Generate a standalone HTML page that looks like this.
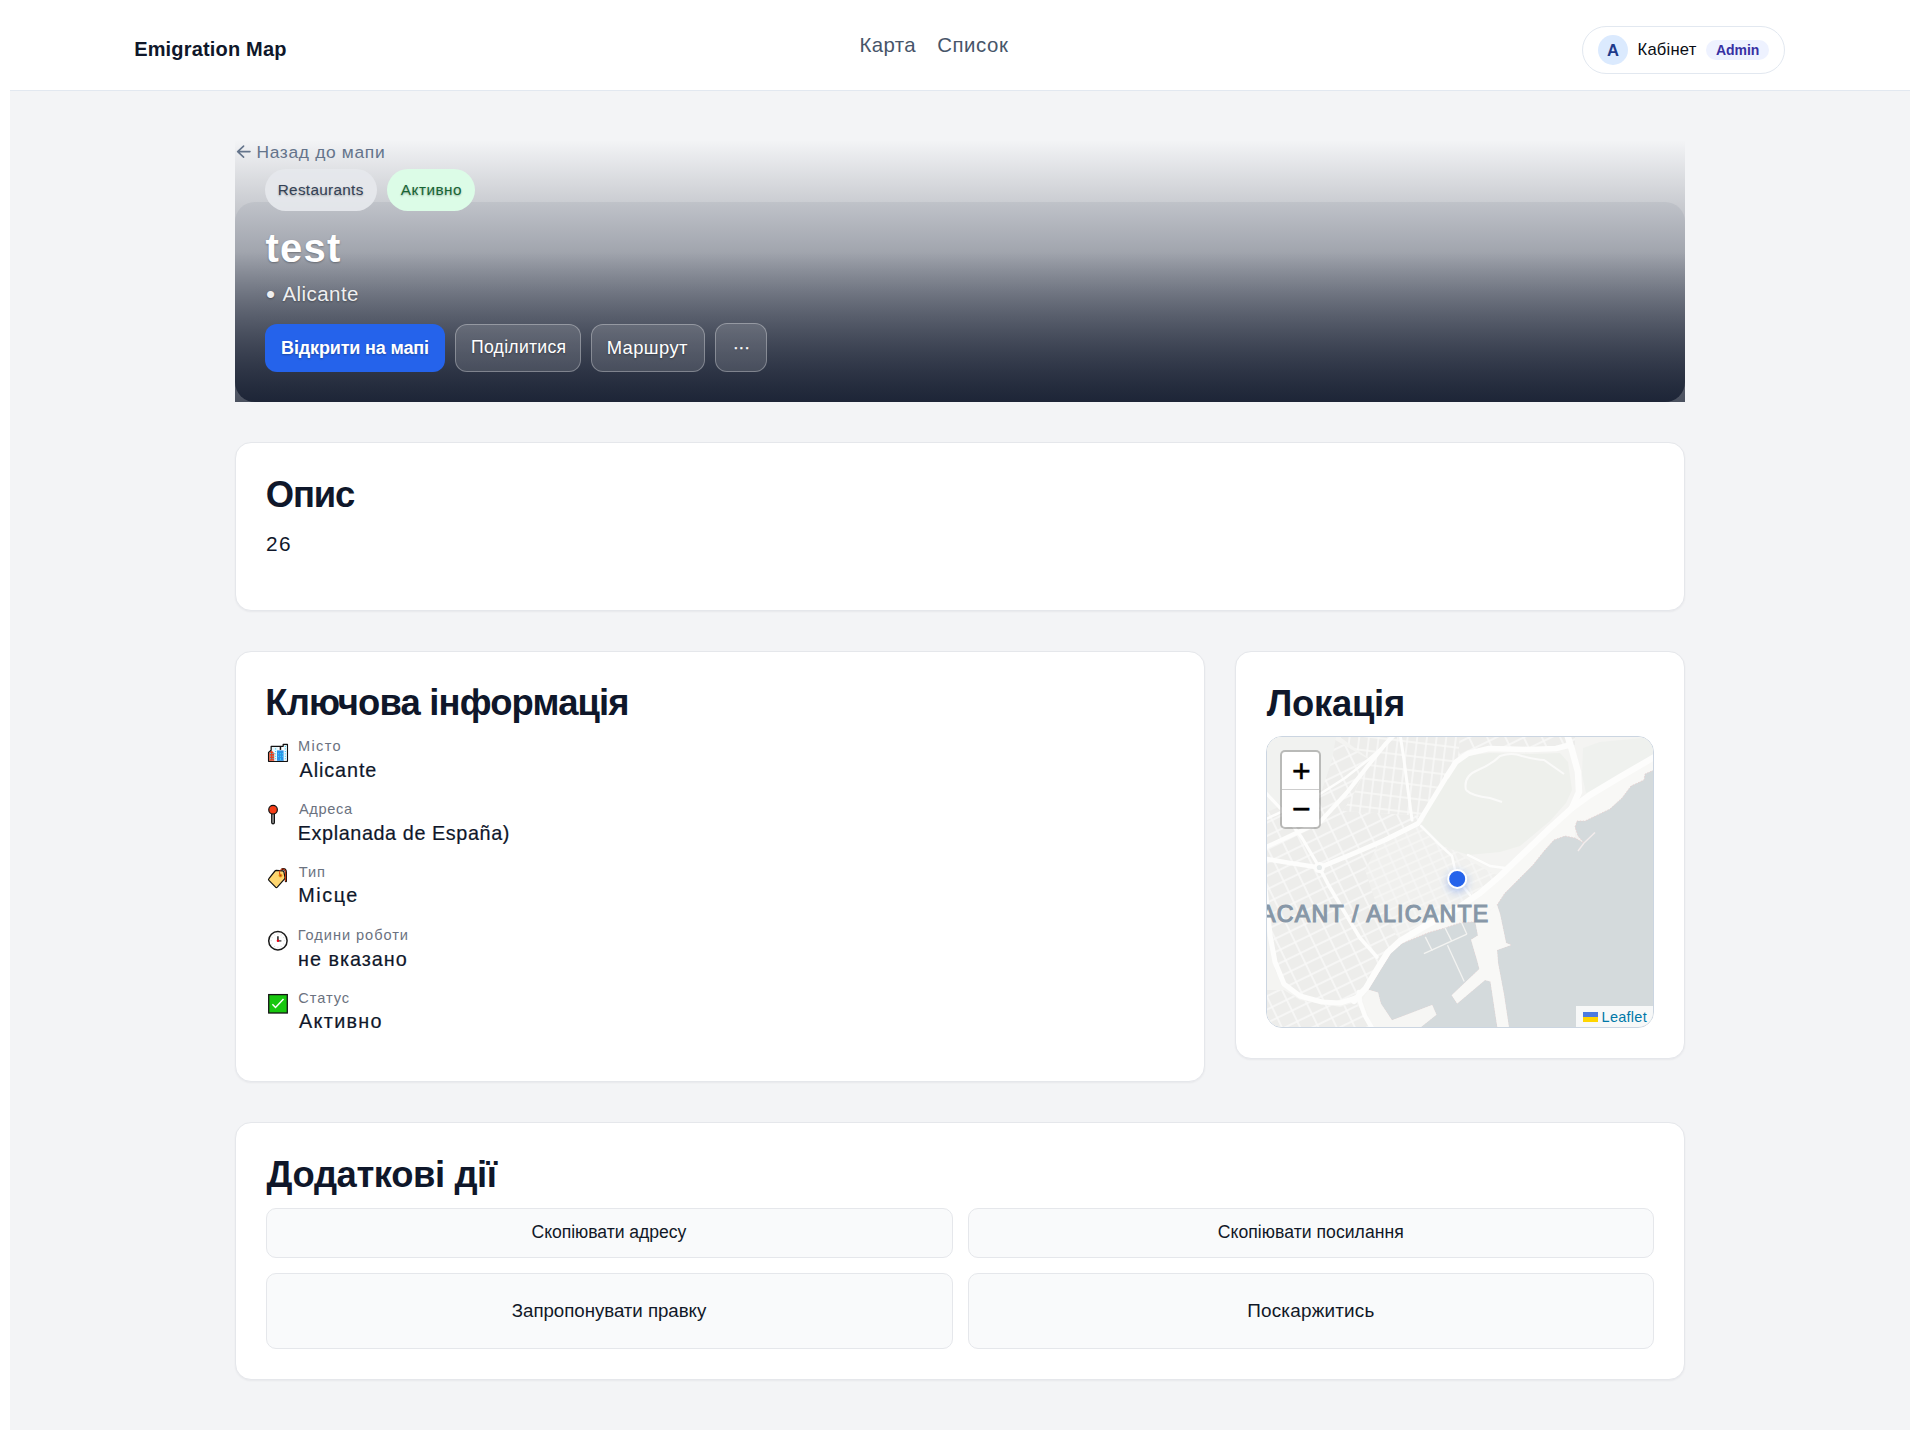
<!DOCTYPE html>
<html lang="uk">
<head>
<meta charset="utf-8">
<title>test — Emigration Map</title>
<style>
*{box-sizing:border-box;margin:0;padding:0}
html,body{width:1920px;height:1440px;background:#fff;overflow:hidden}
body{font-family:"Liberation Sans",sans-serif;color:#0f172a;position:relative}
.abs{position:absolute}
.t{position:absolute;white-space:nowrap;line-height:1;}
.b{font-weight:700}
#main{left:10px;top:91px;width:1900px;height:1339px;background:#f3f4f6}
#hdrline{left:10px;top:90px;width:1900px;height:1px;background:#e2e8f0}
.card{position:absolute;background:#fff;border:1px solid #e5e7eb;border-radius:16px;box-shadow:0 1px 2px rgba(15,23,42,.05)}
.pill{position:absolute;border-radius:999px}
.hbtn{position:absolute;border-radius:12px;border:1px solid rgba(255,255,255,.3);background:rgba(255,255,255,.13)}
.abtn{position:absolute;border:1px solid #e5e7eb;border-radius:10px;background:#f9fafb}
.lbl{color:#6b7280}
.hs{text-shadow:0 1px 2px rgba(0,0,0,.3)}
</style>
</head>
<body>
<!-- header -->
<div class="abs" id="hdrline"></div>
<div class="t b" id="logo" style="left:134.15px;top:39.25px;font-size:20px;letter-spacing:0.173px">Emigration Map</div>
<div class="t" id="nav1" style="left:859.50px;top:34.60px;font-size:20.4px;color:#475569;letter-spacing:0.355px">Карта</div>
<div class="t" id="nav2" style="left:937.15px;top:34.60px;font-size:20.4px;color:#475569;letter-spacing:0.600px">Список</div>
<div class="pill" id="userpill" style="left:1582px;top:26px;width:203px;height:48px;border:1px solid #e2e8f0;background:#fff"></div>
<div class="pill" id="avatar" style="left:1598px;top:35px;width:30px;height:30px;background:#dbeafe"></div>
<div class="t b" id="avA" style="left:1607.00px;top:42.61px;font-size:16.6px;color:#1e3a8a;letter-spacing:0.000px">A</div>
<div class="t" id="cab" style="left:1637.50px;top:42.00px;font-size:16.6px;color:#0a0d14;letter-spacing:0.209px">Кабінет</div>
<div class="pill" id="admbg" style="left:1706px;top:40px;width:63px;height:20px;background:#eef2ff"></div>
<div class="t b" id="adm" style="left:1716.00px;top:43.00px;font-size:14px;color:#3730a3;letter-spacing:-0.063px">Admin</div>

<div class="abs" id="main"></div>

<!-- hero -->
<div class="abs" id="herocard" style="left:235px;top:202px;width:1450px;height:200px;border-radius:20px;background:linear-gradient(180deg,rgba(15,23,42,0) 0%,rgba(15,23,42,0) 25%,rgba(15,23,42,.74) 100%),#e5e7eb"></div>
<div class="abs" id="herograd" style="left:235px;top:140px;width:1450px;height:262px;background:linear-gradient(180deg,rgba(15,23,42,0) 0%,rgba(15,23,42,.74) 100%)"></div>
<svg class="abs" style="left:230px;top:140px" width="30" height="24" viewBox="230 140 30 24"><path d="M250 151.6H237.6M243.6 146.1L237.7 151.6L243.6 157.1" fill="none" stroke="#64748b" stroke-width="1.6" stroke-linecap="round" stroke-linejoin="round"/></svg>
<div class="t" id="back" style="left:256.40px;top:143.61px;font-size:17.4px;color:#64748b;letter-spacing:0.685px">Назад до мапи</div>
<div class="pill" id="chip1" style="left:265px;top:169px;width:112px;height:42px;background:rgba(230,232,236,.94)"></div>
<div class="t hs" id="chip1t" style="left:277.75px;top:181.60px;font-size:15.3px;color:#334155;letter-spacing:0.305px">Restaurants</div>
<div class="pill" id="chip2" style="left:387px;top:169px;width:88px;height:42px;background:#dcfce7"></div>
<div class="t hs" id="chip2t" style="left:400.85px;top:181.60px;font-size:15.3px;color:#166534;letter-spacing:0.499px">Активно</div>
<div class="t b hs" id="title" style="left:265.50px;top:227.71px;font-size:40px;color:#fff;letter-spacing:1.250px">test</div>
<div class="t hs" id="locb" style="left:265.95px;top:281px;font-size:26px;color:rgba(255,255,255,.92);letter-spacing:0.000px">•</div>
<div class="t hs" id="loc" style="left:282.50px;top:284.00px;font-size:20.5px;color:rgba(255,255,255,.92);letter-spacing:0.436px">Alicante</div>
<div class="abs" id="hb1" style="left:265px;top:324px;width:180px;height:48px;border-radius:12px;background:#2563eb"></div>
<div class="t b hs" id="hb1t" style="left:281.10px;top:338.75px;font-size:18px;color:#fff;letter-spacing:-0.150px">Відкрити на мапі</div>
<div class="hbtn" id="hb2" style="left:455px;top:324px;width:126px;height:48px"></div>
<div class="t hs" id="hb2t" style="left:471.00px;top:339.00px;font-size:17.6px;color:#fff;letter-spacing:0.282px">Поділитися</div>
<div class="hbtn" id="hb3" style="left:591px;top:324px;width:114px;height:48px"></div>
<div class="t hs" id="hb3t" style="left:606.70px;top:339.21px;font-size:18.4px;color:#fff;letter-spacing:0.388px">Маршрут</div>
<div class="hbtn" id="hb4" style="left:715px;top:323px;width:52px;height:49px"></div>
<div class="t hs" id="hb4t" style="left:732.9px;top:339px;font-size:17px;color:#fff;letter-spacing:0px;-webkit-text-stroke:.3px #fff">···</div>

<!-- description card -->
<div class="card" id="c1" style="left:235px;top:442px;width:1450px;height:169px"></div>
<div class="t b" id="h1" style="left:265.80px;top:477.41px;font-size:36.4px;letter-spacing:-1.120px">Опис</div>
<div class="t" id="d26" style="left:266.05px;top:533.81px;font-size:20.8px;letter-spacing:1.350px">26</div>

<!-- key info card -->
<div class="card" id="c2" style="left:235px;top:651px;width:970px;height:431px"></div>
<div class="t b" id="h2" style="left:265.30px;top:685.41px;font-size:36.4px;letter-spacing:-0.832px">Ключова інформація</div>

<div class="t lbl" id="l1" style="left:298.10px;top:738.81px;font-size:14.6px;letter-spacing:1.292px">Місто</div>
<div class="t" id="v1" style="left:299.55px;top:760.71px;font-size:19.8px;letter-spacing:0.919px;-webkit-text-stroke:.2px #0f172a">Alicante</div>
<div class="t lbl" id="l2" style="left:299.00px;top:802.00px;font-size:14.6px;letter-spacing:0.630px">Адреса</div>
<div class="t" id="v2" style="left:297.80px;top:823.61px;font-size:19.8px;letter-spacing:0.600px;-webkit-text-stroke:.2px #0f172a">Explanada de España)</div>
<div class="t lbl" id="l3" style="left:298.75px;top:864.91px;font-size:14.6px;letter-spacing:0.950px">Тип</div>
<div class="t" id="v3" style="left:298.25px;top:885.50px;font-size:19.8px;letter-spacing:1.556px;-webkit-text-stroke:.2px #0f172a">Місце</div>
<div class="t lbl" id="l4" style="left:297.75px;top:927.75px;font-size:14.6px;letter-spacing:0.944px">Години роботи</div>
<div class="t" id="v4" style="left:298.05px;top:950.00px;font-size:19.8px;letter-spacing:0.990px;-webkit-text-stroke:.2px #0f172a">не вказано</div>
<div class="t lbl" id="l5" style="left:298.25px;top:990.75px;font-size:14.6px;letter-spacing:0.950px">Статус</div>
<div class="t" id="v5" style="left:299.00px;top:1011.50px;font-size:19.8px;letter-spacing:1.333px;-webkit-text-stroke:.2px #0f172a">Активно</div>

<!--ICONS-->
<svg class="abs" style="left:264px;top:740px" width="28" height="280" viewBox="264 740 28 280">
<!-- city -->
<path d="M268.6 761.3V752.6L271.2 750.2V746.3H283.2V744.5H287.4V761.3Z" fill="#fff" stroke="#111" stroke-width="1.3" stroke-linejoin="round"/>
<rect x="271.9" y="747.2" width="6.4" height="13.6" fill="#e9f7fd"/><rect x="279.7" y="746.3" width="1.5" height="3.6" fill="#111"/>
<rect x="283.9" y="745.3" width="2.9" height="15.5" fill="#eef8fd"/>
<path d="M269.3 760.8V753.2L271.7 750.6L274.2 753.2V760.8Z" fill="#e8401c"/>
<rect x="277" y="750.4" width="6.6" height="10.4" fill="#2a93e8"/>
<g fill="#35d6fb"><rect x="270" y="753" width="1" height="1"/><rect x="272.4" y="753" width="1.2" height="1"/><rect x="270" y="755.6" width="1" height="1"/><rect x="272.4" y="755.6" width="1.2" height="1"/><rect x="270" y="758.2" width="1" height="1"/><rect x="272.4" y="758.2" width="1.2" height="1"/>
<rect x="275" y="748.4" width="1.1" height="1"/><rect x="275" y="751" width="1.1" height="1"/><rect x="275" y="753.4" width="1.1" height="1"/><rect x="275" y="755.8" width="1.1" height="1"/><rect x="275" y="758.2" width="1.1" height="1"/>
<rect x="284.8" y="746" width="1.1" height="1"/><rect x="284.8" y="748.4" width="1.1" height="1"/><rect x="284.8" y="751" width="1.1" height="1"/><rect x="284.8" y="753.4" width="1.1" height="1"/><rect x="284.8" y="755.8" width="1.1" height="1"/><rect x="284.8" y="758.2" width="1.1" height="1"/>
<rect x="278" y="753.2" width="1" height="1"/><rect x="280" y="753.2" width="1" height="1"/><rect x="282" y="753.2" width="1" height="1"/><rect x="278" y="755.8" width="1" height="1"/><rect x="280" y="755.8" width="1" height="1"/><rect x="282" y="755.8" width="1" height="1"/><rect x="280" y="758.2" width="1" height="1.6"/></g>
<!-- pin -->
<path d="M271.7 813.5H274.4V822.6Q274.4 823.9 273.05 823.9Q271.7 823.9 271.7 822.6Z" fill="#9a9a9a" stroke="#111" stroke-width="1.2" stroke-linejoin="round"/>
<circle cx="273.05" cy="809.7" r="4.3" fill="#f53d17" stroke="#111" stroke-width="1.2"/>
<!-- tag -->
<path d="M282.4 869.2Q285.9 868.6 285.9 872.2V881.2" fill="none" stroke="#111" stroke-width="2.2" stroke-linecap="round"/>
<path d="M276.2 870.4L282.6 870.9Q283.7 871 283.9 872L285 877.3Q285.2 878.2 284.6 878.9L277.3 887.1Q276.5 887.9 275.6 887.2L268.9 880.3Q268.1 879.5 268.9 878.6L275 871Q275.5 870.4 276.2 870.4Z" fill="#fed670" stroke="#111" stroke-width="1.2" stroke-linejoin="round"/>
<circle cx="280.5" cy="875.4" r="2" fill="#eca416"/><circle cx="280.5" cy="875.4" r="1" fill="#c6380f"/>
<path d="M279.6 874.2Q279 869 282.6 868.9Q285.6 868.8 285.6 872.2V881" fill="none" stroke="#d83c10" stroke-width="1" stroke-linecap="round"/>
<!-- clock -->
<circle cx="277.9" cy="940.7" r="9.2" fill="#fff" stroke="#1a1a1a" stroke-width="1.5"/>
<g stroke="#d9d9d9" stroke-width=".9"><path d="M277.9 933.3v1.4M277.9 946.8v1.4M270.5 940.7h1.4M283.9 940.7h1.4M274.2 934.3l.7 1.2M281.6 934.3l-.7 1.2M274.2 947.1l.7-1.2M281.6 947.1l-.7-1.2M271.5 937l1.2.7M284.3 937l-1.2.7M271.5 944.4l1.2-.7M284.3 944.4l-1.2-.7"/></g>
<path d="M277.9 940.7V936.3" stroke="#444" stroke-width="1.8"/><path d="M277.9 940.9H281.4" stroke="#444" stroke-width="1.4"/>
<circle cx="277.9" cy="940.8" r="1.2" fill="#f00014"/>
<!-- check -->
<rect x="268.7" y="994.6" width="18.6" height="18.4" fill="#18c70f" stroke="#151515" stroke-width="1.3"/>
<path d="M272.4 1004.3L275.5 1007.5L283.5 999.1" fill="none" stroke="#fff" stroke-width="1.5"/>
</svg>
<!--/ICONS-->
<!-- location card -->
<div class="card" id="c3" style="left:1235px;top:651px;width:450px;height:408px"></div>
<div class="t b" id="h3" style="left:1266.85px;top:686.00px;font-size:36.4px;letter-spacing:-0.262px">Локація</div>
<div class="abs" id="map" style="left:1266px;top:736px;width:388px;height:292px;border:1px solid #cbd5e1;border-radius:16px;overflow:hidden;background:#f2f3f0">
<!--MAP--><svg width="386" height="290" viewBox="1267 737 386 290" style="display:block">
<defs>
<pattern id="g1" width="16.4" height="12" patternUnits="userSpaceOnUse" patternTransform="translate(1270 741) rotate(-26)"><rect width="16.4" height="12" fill="#f9f9f8"/><rect x=".8" y=".8" width="14.8" height="10.4" fill="#ededeb"/></pattern>
<pattern id="g2" width="9.6" height="14" patternUnits="userSpaceOnUse" patternTransform="translate(1272 739) rotate(7)"><rect width="9.6" height="14" fill="#f9f9f8"/><rect x=".75" y=".75" width="8.1" height="12.5" fill="#ededeb"/></pattern>
<pattern id="g3" width="12" height="8.5" patternUnits="userSpaceOnUse" patternTransform="translate(1272 739) rotate(-24)"><rect width="12" height="8.5" fill="#f7f7f6"/><rect x=".7" y=".7" width="10.6" height="7.1" fill="#f0f0ee"/></pattern>
<filter id="glow" x="-100%" y="-100%" width="300%" height="300%"><feGaussianBlur stdDeviation="5"/></filter>
</defs>
<rect x="1267" y="737" width="386" height="290" fill="#f4f4f2"/>
<polygon fill="url(#g1)" points="1267,737 1330,737 1370,760 1353,795 1343,811 1424,816 1440,838 1462,856 1490,880 1455,910 1425,926 1400,941 1388,952 1366,988 1340,1004 1300,997 1284,986 1275,970 1267,915"/>
<polygon fill="url(#g2)" points="1340,737 1460,737 1458,760 1438,796 1424,816 1343,811 1353,795 1371,760"/>
<polygon fill="url(#g3)" points="1405,829 1424,816 1440,838 1462,856 1490,872 1500,876 1480,893 1455,910 1425,926 1400,941 1390,925 1375,900 1365,870 1380,841"/>
<polygon fill="url(#g1)" points="1460,737 1575,737 1575,745 1530,748 1492,747 1474,750 1458,758"/>
<polygon fill="url(#g1)" points="1267,990 1284,990 1300,1000 1340,1007 1356,1002 1364,1016 1370,1027 1267,1027"/>
<polygon fill="#f1f2f0" points="1267,737 1336,737 1332,760 1322,790 1290,802 1267,812"/>
<polygon fill="#eef0ec" points="1439,792 1447,776 1457,763 1470,755 1490,753 1530,754 1560,753 1568,762 1572,790 1566,803 1550,821 1520,846 1500,852 1468,855 1439,845 1425,833 1421,826 1433,800"/>
<polygon fill="#eff1ee" points="1583,748 1600,742 1654,737 1654,756 1620,774 1597,788 1586,793 1582,775"/>
<polygon fill="#f8f8f6" points="1654,757 1620,777 1590,795 1572,808 1550,828 1525,852 1500,876 1480,893 1455,910 1425,926 1400,941 1388,952 1378,968 1366,988 1368.3,989.7 1381,969 1391,953 1402,943.5 1429,932.5 1443,928.5 1460,923 1475.3,921.7 1497,905 1505,893 1518,880 1533,865 1545,850 1554,840 1565,836 1575,838 1575,827 1577,821 1585,821 1610,809 1622,798 1631,786 1644,780 1645,774 1654,770"/>
<polygon fill="#d4dadc" stroke="#e9cfcf" stroke-width=".8" stroke-dasharray="1.5 1.5" points="1654,770 1645,774 1644,780 1631,786 1622,798 1610,809 1585,821 1577,821 1575,827 1578,836 1584,843 1575,838 1565,836 1554,840 1545,850 1533,865 1518,880 1505,893 1497,905 1500,914 1505,938 1506,943 1511,945 1497,950 1498,963 1504,995 1509,1028 1654,1028"/>
<polygon fill="#d4dadc" stroke="#e9cfcf" stroke-width=".8" stroke-dasharray="1.5 1.5" points="1475.3,921.7 1460,923 1443,928.5 1429,932.5 1402,943.5 1391,953 1381,969 1368.3,989.7 1378,992.5 1380.8,1003.6 1392,1020.3 1432.2,1005 1436.4,1014.7 1419.7,1028 1497.5,1028 1490.5,981.4 1485,980 1457.2,1003.6 1451.7,995.3 1479.4,968.9 1478,963.3 1471.1,939.7 1478,935.6"/>
<polygon fill="#f8f8f6" points="1475.3,921.7 1478,935.6 1471.1,939.7 1478,963.3 1479.4,968.9 1451.7,995.3 1457.2,1003.6 1485,980 1490.5,981.4 1497.5,1028 1509,1028 1504,995 1498,963 1497,950 1511,945 1506,943 1505,938 1500,914 1497,905"/>
<polygon fill="#f6f6f4" points="1368.3,989.7 1378,992.5 1380.8,1003.6 1392,1020.3 1432.2,1005 1436.4,1014.7 1419.7,1028 1373,1028 1362,1000"/>
<line x1="1423.9" y1="953.6" x2="1466.9" y2="934.2" stroke="#f3f3f1" stroke-width="1.3"/>
<line x1="1425.3" y1="936.9" x2="1432.2" y2="950.8" stroke="#f3f3f1" stroke-width="1.3"/>
<line x1="1444.7" y1="927.2" x2="1451.7" y2="941.1" stroke="#f3f3f1" stroke-width="1.3"/>
<line x1="1460" y1="918.9" x2="1466.9" y2="934.2" stroke="#f3f3f1" stroke-width="1.3"/>
<line x1="1447.5" y1="945.3" x2="1464.2" y2="981.4" stroke="#f3f3f1" stroke-width="1.3"/>
<line x1="1584" y1="843" x2="1595" y2="832.5" stroke="#f3ecec" stroke-width="1.4"/><line x1="1584" y1="843" x2="1578" y2="851" stroke="#f3ecec" stroke-width="1.4"/>
<path d="M1466 790 Q1463 776 1478 770 Q1492 764 1500 756 Q1512 752 1522 756 Q1536 760 1544 760 L1564 774 M1466 790 Q1472 796 1490 798 L1502 802" fill="none" stroke="#fafaf9" stroke-width="2"/>
<polyline fill="none" stroke="#fdfdfc" stroke-width="6.2" stroke-linejoin="round" stroke-linecap="round" points="1656,756 1620,777 1590,795 1572,808 1550,828 1525,852 1500,876 1480,893 1455,910 1425,926 1400,941 1388,952 1378,968 1366,988 1354,1001"/>
<polyline fill="none" stroke="#fdfdfc" stroke-width="4.5" stroke-linejoin="round" stroke-linecap="round" points="1359,992 1360,1002 1365,1016 1373,1030"/>
<polyline fill="none" stroke="#fdfdfc" stroke-width="5" stroke-linejoin="round" stroke-linecap="round" points="1356,998 1340,1003 1322,1002 1300,996 1284,984 1275,962 1270,935 1266,897 1264,880"/>
<polyline fill="none" stroke="#fdfdfc" stroke-width="6.5" stroke-linejoin="round" stroke-linecap="round" points="1567,734 1572,750 1578,772 1579,792 1572,808"/>
<polyline fill="none" stroke="#fdfdfc" stroke-width="5.5" stroke-linejoin="round" stroke-linecap="round" points="1447,776 1456,762 1468,753.5 1489,748.5 1530,749.5 1556,748.5 1570,745"/>
<polyline fill="none" stroke="#fdfdfc" stroke-width="4.8" stroke-linejoin="round" stroke-linecap="round" points="1264,858.6 1290,863 1319.4,867.5 1350,855 1385,840 1418,823.5 1433,799 1447,776"/>
<polyline fill="none" stroke="#fdfdfc" stroke-width="4.2" stroke-linejoin="round" stroke-linecap="round" points="1264,848 1292,835 1320,822 1347,792.5 1368,765.5 1385,744.5 1395,734"/>
<polyline fill="none" stroke="#fdfdfc" stroke-width="3.6" stroke-linejoin="round" stroke-linecap="round" points="1319.4,867.5 1329,886 1345,913 1360,938 1377,957"/>
<polyline fill="none" stroke="#fdfdfc" stroke-width="3.2" stroke-linejoin="round" stroke-linecap="round" points="1319.4,867.5 1302,838 1281,809 1264,791"/>
<polyline fill="none" stroke="#fdfdfc" stroke-width="2.5" stroke-linejoin="round" stroke-linecap="round" points="1264,820 1290,808 1320,794 1345,778 1368,760 1385,745"/>
<polyline fill="none" stroke="#fdfdfc" stroke-width="3" stroke-linejoin="round" stroke-linecap="round" points="1400,734 1404,760 1408,790 1412,820"/>
<polyline fill="none" stroke="#fdfdfc" stroke-width="2.5" stroke-linejoin="round" stroke-linecap="round" points="1421,826 1440,845 1452,856 1457,879 1470,895"/>
<polyline fill="none" stroke="#fdfdfc" stroke-width="2.5" stroke-linejoin="round" stroke-linecap="round" points="1468,855 1490,866 1505,868"/>
<circle cx="1319.4" cy="867.5" r="5.5" fill="#fdfdfc"/><circle cx="1319.4" cy="867.5" r="2.6" fill="#e6eaea"/>
<text x="1489.6" y="922.4" text-anchor="end" font-family="Liberation Sans, sans-serif" font-size="23.2" letter-spacing="1.25" fill="#8797a7" stroke="#8797a7" stroke-width="1.1">ACANT / ALICANTE</text>
<circle cx="1457.2" cy="882" r="9" fill="#2563eb" opacity=".45" filter="url(#glow)"/>
<circle cx="1457.2" cy="878.9" r="9" fill="#2563eb" stroke="#fff" stroke-width="2"/>
</svg><!--/MAP-->
<div class="abs" id="attr" style="right:0;bottom:0;width:77px;height:21px;background:rgba(255,255,255,.8)"></div>
<svg class="abs" style="left:316px;top:275.4px" width="15" height="10" viewBox="0 0 15 10"><rect width="15" height="5" fill="#4c7be1"/><rect y="5" width="15" height="5" fill="#ffd500"/></svg>
</div>
<div class="abs" id="zc" style="left:1280px;top:750.4px;width:41px;height:79px;border:2px solid rgba(0,0,0,.23);border-radius:5px;background:#fff;background-clip:padding-box"></div>
<div class="abs" style="left:1282px;top:789.4px;width:37px;height:1px;background:#ccc"></div>
<div class="t" id="zp" style="left:1292.1px;top:754.6px;font-size:32px;color:#000;-webkit-text-stroke:.5px #000">+</div>
<div class="t" id="zm" style="left:1292.1px;top:793.1px;font-size:32px;color:#000;-webkit-text-stroke:.5px #000">−</div>
<div class="t" id="leaf" style="left:1601.55px;top:1009.90px;font-size:14.5px;color:#0078a8;letter-spacing:0.272px">Leaflet</div>

<!-- extra actions -->
<div class="card" id="c4" style="left:235px;top:1122px;width:1450px;height:258px"></div>
<div class="t b" id="h4" style="left:266.60px;top:1156.91px;font-size:36.4px;letter-spacing:-0.404px">Додаткові дії</div>
<div class="abtn" id="a1" style="left:266px;top:1208px;width:687px;height:50px"></div>
<div class="abtn" id="a2" style="left:968px;top:1208px;width:686px;height:50px"></div>
<div class="abtn" id="a3" style="left:266px;top:1273px;width:687px;height:76px"></div>
<div class="abtn" id="a4" style="left:968px;top:1273px;width:686px;height:76px"></div>
<div class="t" id="a1t" style="left:531.50px;top:1223.50px;font-size:17.6px;color:#111827;letter-spacing:-0.047px">Скопіювати адресу</div>
<div class="t" id="a2t" style="left:1217.75px;top:1223.50px;font-size:17.6px;color:#111827;letter-spacing:0.039px">Скопіювати посилання</div>
<div class="t" id="a3t" style="left:511.85px;top:1301.81px;font-size:18.7px;color:#111827;letter-spacing:-0.043px">Запропонувати правку</div>
<div class="t" id="a4t" style="left:1247.25px;top:1301.81px;font-size:18.9px;color:#111827;letter-spacing:0.195px">Поскаржитись</div>
</body>
</html>
